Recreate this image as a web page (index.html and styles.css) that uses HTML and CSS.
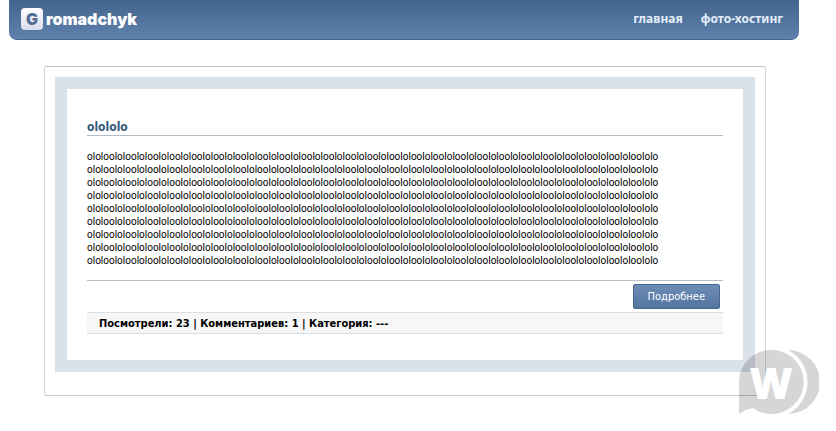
FILE: index.html
```html
<!DOCTYPE html>
<html lang="ru">
<head>
    <meta charset="utf-8">
    <meta name="viewport" content="width=device-width, initial-scale=1">
    <title>Gromadchyk</title>
    <link rel="stylesheet" href="styles.css">
</head>
<body>
    <header class="header">
        <a class="logo" href="#"><span class="logo-letter">G</span>romadchyk</a>
        <nav class="menu">
            <a href="#">главная</a>
            <a href="#">фото-хостинг</a>
        </nav>
    </header>

    <main class="content">
        <article class="post">
            <h2 class="post-title"><a href="#">olololo</a></h2>
            <p class="post-text">
                ololoololoololoololoololoololoololoololoololoololoololoololoololoololoololoololoololoololoololoololoololoololoololoololoololoololo<br>
                ololoololoololoololoololoololoololoololoololoololoololoololoololoololoololoololoololoololoololoololoololoololoololoololoololoololo<br>
                ololoololoololoololoololoololoololoololoololoololoololoololoololoololoololoololoololoololoololoololoololoololoololoololoololoololo<br>
                ololoololoololoololoololoololoololoololoololoololoololoololoololoololoololoololoololoololoololoololoololoololoololoololoololoololo<br>
                ololoololoololoololoololoololoololoololoololoololoololoololoololoololoololoololoololoololoololoololoololoololoololoololoololoololo<br>
                ololoololoololoololoololoololoololoololoololoololoololoololoololoololoololoololoololoololoololoololoololoololoololoololoololoololo<br>
                ololoololoololoololoololoololoololoololoololoololoololoololoololoololoololoololoololoololoololoololoololoololoololoololoololoololo<br>
                ololoololoololoololoololoololoololoololoololoololoololoololoololoololoololoololoololoololoololoololoololoololoololoololoololoololo<br>
                ololoololoololoololoololoololoololoololoololoololoololoololoololoololoololoololoololoololoololoololoololoololoololoololoololoololo
            </p>
            <div class="post-more">
                <button class="button" type="button">Подробнее</button>
            </div>
            <div class="post-info">Посмотрели: 23 | Комментариев: 1 | Категория: ---</div>
        </article>

        <svg class="watermark" width="80" height="64" viewBox="0 0 80 64" aria-hidden="true">
            <path d="M32 0A32 32 0 1 1 14 58Q7 59 0 64V32A32 32 0 0 1 32 0Z"/>
            <path d="M49 0A32 32 0 0 1 49 64A36 36 0 0 0 49 0Z"/>
            <text x="32" y="48" text-anchor="middle">W</text>
        </svg>
    </main>
</body>
</html>
```

FILE: styles.css
```css
body {
    margin: 0;
    background: #fff;
    color: #000;
    font-family: "DejaVu Sans Condensed", "DejaVu Sans", sans-serif;
    font-size: 11px;
    line-height: 13px;
}

a {
    color: inherit;
    text-decoration: none;
}

.header {
    display: flex;
    align-items: center;
    justify-content: space-between;
    box-sizing: border-box;
    height: 40px;
    margin: 0 37px 0 9px;
    padding: 0 16px 2px 12px;
    border-bottom: 1px solid #46678f;
    border-radius: 0 0 8px 8px;
    background: linear-gradient(#42648c, #5f82ad);
    color: #fff;
}

.logo {
    display: flex;
    align-items: center;
    gap: 3px;
    font-family: Inter, "Liberation Sans", sans-serif;
    font-size: 16px;
    font-weight: 900;
    line-height: 22px;
}

.logo-letter {
    width: 22px;
    height: 22px;
    border-radius: 4px;
    background: linear-gradient(#fff, #d5dcea);
    color: #566c96;
    text-align: center;
}

.menu {
    display: flex;
    gap: 18px;
    color: #e4eefa;
    font-family: "Noto Sans", sans-serif;
    font-size: 12px;
    font-weight: bold;
}

.content {
    position: relative;
    margin: 26px 70px 35px 44px;
    padding: 10px 10px 23px;
    border: 1px solid #d5d9dc;
    border-top-color: #b9c4ce;
    border-bottom-color: #c4c8cb;
    border-radius: 2px;
}

.post {
    padding: 31px 20px 26px;
    border: 12px solid #dae1e7;
}

.post-title {
    margin: 0 0 14px;
    border-bottom: 1px solid #b0bfc8;
    color: #36597a;
    font-size: 12px;
    line-height: 15px;
}

.post-text {
    margin: 0;
    padding-bottom: 13px;
    border-bottom: 1px solid #b4bfc7;
    font-family: Roboto, sans-serif;
    font-size: 10px;
    white-space: nowrap;
}

.post-more {
    display: flex;
    justify-content: flex-end;
    padding: 3px;
}

.button {
    height: 25px;
    padding: 0 14px;
    border: 1px solid #45658d;
    border-radius: 2px;
    background: linear-gradient(#6d8db5, #53749f);
    color: #fff;
    font: inherit;
}

.post-info {
    padding: 4px 12px 3px;
    border: solid #dcdfe1;
    border-width: 1px 0;
    background: #f7f7f7;
    font-weight: bold;
}

/* sits over the corner of the frame */
.watermark {
    position: absolute;
    right: -54px;
    bottom: -19px;
    fill: rgba(0, 0, 0, 0.16);
}

.watermark text {
    fill: #fff;
    stroke: #fff;
    stroke-width: 2px;
    font-family: "Liberation Sans", sans-serif;
    font-size: 42px;
    font-weight: bold;
}
```
